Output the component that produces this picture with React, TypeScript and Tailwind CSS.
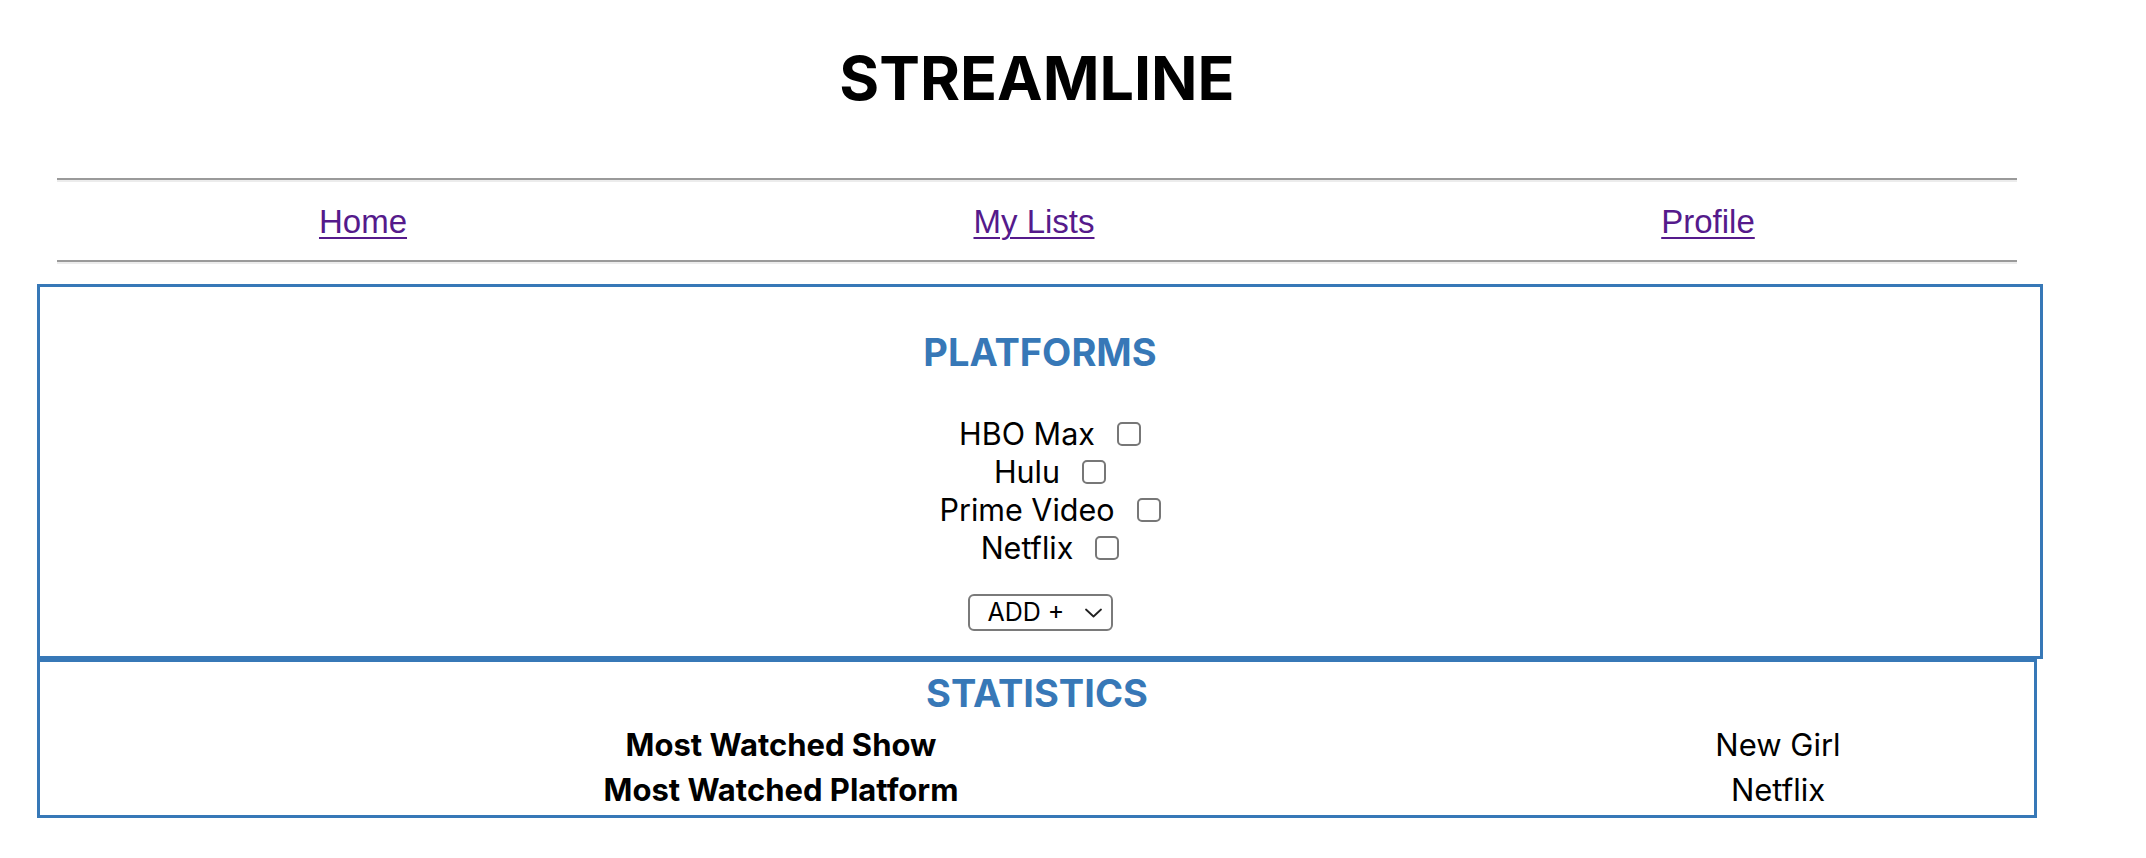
import { useState } from 'react';

const platforms = ['HBO Max', 'Hulu', 'Prime Video', 'Netflix'];

const stats: { label: string; value: string }[] = [
  { label: 'Most Watched Show', value: 'New Girl' },
  { label: 'Most Watched Platform', value: 'Netflix' },
];

function Rule() {
  return <div className="h-[4px] border-t-2 border-b-2 border-t-[#9a9a9a] border-b-[#ececec]" />;
}

export default function App() {
  const [checked, setChecked] = useState<string[]>([]);

  const toggle = (name: string) => {
    setChecked(prev =>
      prev.includes(name) ? prev.filter(p => p !== name) : [...prev, name]
    );
  };

  return (
    <div className="min-h-[858px] w-[2146px] bg-white text-black font-['Inter',sans-serif]">
      {/* Header */}
      <div className="ml-[57px] w-[1960px]">
        <h1 className="pt-[41px] text-center text-[61px] font-bold leading-[75px]">STREAMLINE</h1>

        <div className="mt-[62px]">
          <Rule />
          <nav className="grid grid-cols-[612px_730px_618px] py-[21px] pb-[19px] font-['Liberation_Sans',Arial,sans-serif] text-[33px] leading-[38px]">
            <a href="#" className="text-center text-[#551a8b] underline decoration-2 underline-offset-[4px]">Home</a>
            <a href="#" className="text-center text-[#551a8b] underline decoration-2 underline-offset-[4px]">My Lists</a>
            <a href="#" className="text-center text-[#551a8b] underline decoration-2 underline-offset-[4px]">Profile</a>
          </nav>
          <Rule />
        </div>
      </div>

      {/* Platforms */}
      <section className="ml-[37px] mt-[20px] w-[2006px] border-[3px] border-[#3778b7] pt-[42px] pb-[25px] flex flex-col items-center">
        <h2 className="text-[38px] font-bold leading-[46px] text-[#3778b7]">PLATFORMS</h2>
        <div className="mt-[40px] flex flex-col items-center">
          {platforms.map(p => (
            <label key={p} className="flex items-center gap-[22px] text-[30.5px] leading-[38px] ml-[20px]">
              <span>{p}</span>
              <input
                type="checkbox"
                checked={checked.includes(p)}
                onChange={() => toggle(p)}
                className="appearance-none w-[24px] h-[24px] rounded-[5px] border-2 border-[#777777] bg-white checked:bg-[#3778b7]"
              />
            </label>
          ))}
        </div>
        <div className="mt-[27px] flex h-[37px] w-[145px] items-center rounded-[6px] border-2 border-[#7a7a7a] pl-[18px] text-[25px]">
          <span>ADD +</span>
          <svg className="ml-[21px]" width="17" height="10" viewBox="0 0 17 10" fill="none">
            <path d="M1 1.5 L8.5 8.5 L16 1.5" stroke="#222" strokeWidth="1.8" strokeLinecap="round" strokeLinejoin="round" />
          </svg>
        </div>
      </section>

      {/* Statistics */}
      <section className="ml-[37px] w-[2000px] border-[3px] border-t-0 border-[#3778b7] pb-[3px]">
        <div className="border-t-[3px] border-[#3778b7] pt-[8px]">
          <h2 className="text-center text-[38px] font-bold leading-[46px] text-[#3778b7]">STATISTICS</h2>
          <div className="mt-[6px]">
            {stats.map(s => (
              <div key={s.label} className="grid grid-cols-[1482px_1fr] text-[31px] leading-[45px]">
                <span className="text-center font-bold">{s.label}</span>
                <span className="text-center">{s.value}</span>
              </div>
            ))}
          </div>
        </div>
      </section>
    </div>
  );
}
